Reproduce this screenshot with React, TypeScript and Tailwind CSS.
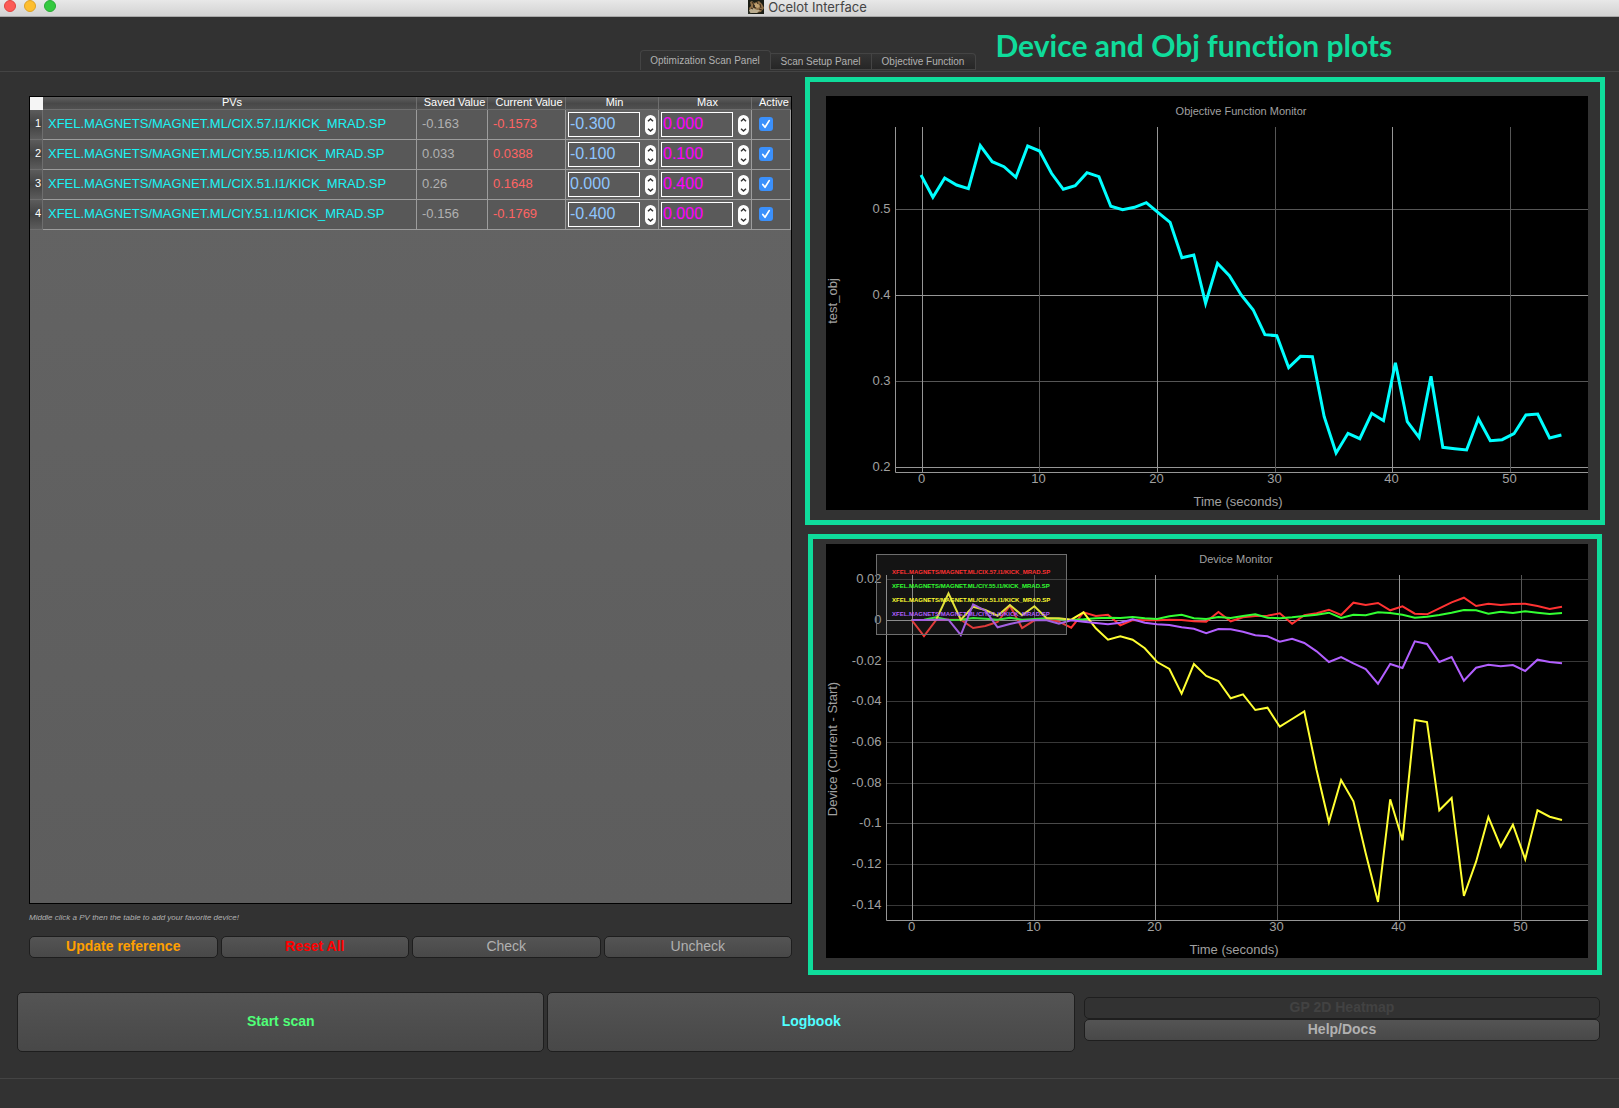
import React from "react";

type Row = { pv: string; saved: string; current: string; min: string; max: string };

const rows: Row[] = [
  { pv: "XFEL.MAGNETS/MAGNET.ML/CIX.57.I1/KICK_MRAD.SP", saved: "-0.163", current: "-0.1573", min: "-0.300", max: "0.000" },
  { pv: "XFEL.MAGNETS/MAGNET.ML/CIY.55.I1/KICK_MRAD.SP", saved: "0.033", current: "0.0388", min: "-0.100", max: "0.100" },
  { pv: "XFEL.MAGNETS/MAGNET.ML/CIX.51.I1/KICK_MRAD.SP", saved: "0.26", current: "0.1648", min: "0.000", max: "0.400" },
  { pv: "XFEL.MAGNETS/MAGNET.ML/CIY.51.I1/KICK_MRAD.SP", saved: "-0.156", current: "-0.1769", min: "-0.400", max: "0.000" },
];

// Chart samples are one per second, measured in thirds of a drawing unit.
const objective = [
  300, 367, 309, 330, 341, 212, 260, 275, 307, 213, 228, 295, 343, 332, 293, 305, 394, 404, 397, 383, 413, 442, 548,
  540, 685, 565, 602, 660, 704, 779, 782, 878, 844, 845, 1025, 1134, 1075, 1091, 1015, 1037, 863, 1040, 1087, 904,
  1117, 1121, 1125, 1031, 1097, 1094, 1076, 1020, 1017, 1089, 1080,
];

const devices = [
  {
    name: rows[0].pv,
    color: "#ff3232",
    data: [
      285, 333, 285, 284, 284, 309, 303, 291, 242, 309, 286, 282, 290, 308, 262, 273, 269, 301, 285, 286, 286, 284, 285,
      289, 290, 261, 289, 277, 273, 272, 265, 296, 271, 265, 254, 270, 233, 240, 234, 256, 244, 266, 268, 250, 232, 218,
      243, 236, 240, 237, 236, 243, 252, 245,
    ],
  },
  {
    name: rows[1].pv,
    color: "#32ff32",
    data: [
      285, 284, 277, 285, 284, 279, 281, 284, 278, 284, 282, 280, 282, 285, 283, 280, 278, 279, 276, 280, 282, 274, 269,
      280, 282, 276, 279, 273, 268, 278, 280, 277, 273, 269, 263, 279, 269, 271, 262, 264, 269, 278, 275, 270, 263, 255,
      256, 266, 260, 264, 259, 263, 267, 264,
    ],
  },
  {
    name: rows[2].pv,
    color: "#ffff32",
    data: [
      285, 285, 284, 205, 284, 245, 255, 272, 240, 271, 244, 280, 280, 284, 262, 310, 344, 334, 344, 370, 411, 432, 506,
      417, 453, 468, 520, 508, 555, 548, 605, 582, 559, 735, 892, 765, 829, 985, 1131, 823, 946, 585, 591, 856, 819,
      1113, 1010, 876, 965, 899, 1003, 856, 875, 885,
    ],
  },
  {
    name: rows[3].pv,
    color: "#b25fff",
    data: [
      285, 285, 284, 284, 330, 238, 257, 307, 297, 289, 285, 286, 296, 286, 290, 294, 298, 293, 283, 293, 298, 300, 307,
      311, 325, 312, 313, 320, 331, 334, 350, 341, 354, 379, 411, 396, 415, 432, 476, 417, 429, 349, 357, 411, 396, 467,
      428, 419, 424, 420, 438, 404, 411, 415,
    ],
  },
];

function toPoints(data: number[], x0: number, step: number, top: number) {
  return data.map((v, i) => `${(x0 + step * i).toFixed(1)},${(v / 3 - top).toFixed(1)}`).join(" ");
}

type Tick = { at: number; label: string; color: string };

type PlotProps = {
  title: string;
  titleX: number;
  yLabel: string;
  xLabelX: number;
  left: number;
  xTicks: Tick[];
  yTicks: Tick[];
  children: React.ReactNode;
};

function Plot({ title, titleX, yLabel, xLabelX, left, xTicks, yTicks, children }: PlotProps) {
  return (
    <svg viewBox="0 0 762 414" className="block w-full bg-black" role="img" aria-label={title} fill="#a0a0a0" fontSize="13">
      {yTicks.map((t) => (
        <g key={t.label}>
          <line x1={left} x2="762" y1={t.at} y2={t.at} stroke={t.color} />
          <text x={left - 5} y={t.at + 3.5} textAnchor="end">{t.label}</text>
        </g>
      ))}
      {xTicks.map((t) => (
        <g key={t.label}>
          <line x1={t.at} x2={t.at} y1="31" y2="376" stroke={t.color} />
          <text x={t.at - 1} y="387" textAnchor="middle">{t.label}</text>
        </g>
      ))}
      <path d={`M${left} 31V376.5H762`} fill="none" stroke="#969696" />
      <text x={titleX} y="19" textAnchor="middle" fontSize="11">{title}</text>
      <text x={xLabelX} y="410" textAnchor="middle">Time (seconds)</text>
      <text transform="translate(11 205) rotate(-90)" textAnchor="middle">{yLabel}</text>
      {children}
    </svg>
  );
}

const bright = "#969696";
const mid = "#565656";
const dim = "#383838";

function ObjectivePlot() {
  return (
    <Plot
      title="Objective Function Monitor"
      titleX={415}
      yLabel="test_obj"
      xLabelX={412}
      left={69.5}
      xTicks={[
        { at: 96.5, label: "0", color: bright },
        { at: 213.5, label: "10", color: mid },
        { at: 331.5, label: "20", color: bright },
        { at: 449.5, label: "30", color: mid },
        { at: 566.5, label: "40", color: bright },
        { at: 684.5, label: "50", color: mid },
      ]}
      yTicks={[
        { at: 113.5, label: "0.5", color: mid },
        { at: 199.5, label: "0.4", color: bright },
        { at: 285.5, label: "0.3", color: mid },
        { at: 371.5, label: "0.2", color: bright },
      ]}
    >
      <polyline points={toPoints(objective, 95, 11.86, 21)} fill="none" stroke="#00ffff" strokeWidth="3" />
    </Plot>
  );
}

function DevicePlot() {
  return (
    <Plot
      title="Device Monitor"
      titleX={410}
      yLabel="Device (Current - Start)"
      xLabelX={408}
      left={60.5}
      xTicks={[
        { at: 86.5, label: "0", color: bright },
        { at: 208.5, label: "10", color: mid },
        { at: 329.5, label: "20", color: bright },
        { at: 451.5, label: "30", color: mid },
        { at: 573.5, label: "40", color: bright },
        { at: 695.5, label: "50", color: mid },
      ]}
      yTicks={[
        { at: 35.5, label: "0.02", color: dim },
        { at: 76.5, label: "0", color: bright },
        { at: 117.5, label: "-0.02", color: dim },
        { at: 157.5, label: "-0.04", color: dim },
        { at: 198.5, label: "-0.06", color: dim },
        { at: 239.5, label: "-0.08", color: dim },
        { at: 279.5, label: "-0.1", color: "#4a4a4a" },
        { at: 320.5, label: "-0.12", color: dim },
        { at: 361.5, label: "-0.14", color: dim },
      ]}
    >
      {devices.map((d) => (
        <polyline key={d.name} points={toPoints(d.data, 85.7, 12.27, 19)} fill="none" stroke={d.color} strokeWidth="2" />
      ))}
      <rect x="50.5" y="10.5" width="190" height="80" fill="#646464" fillOpacity="0.2" stroke="#6e6e6e" />
      {devices.map((d, i) => (
        <text key={d.name} x="66" y={30 + i * 14} fontSize="6" fontWeight="bold" fill={d.color}>{d.name}</text>
      ))}
    </Plot>
  );
}

function SpinBox({ label, value, color }: { label: string; value: string; color: string }) {
  return (
    <div className="flex items-center justify-between px-0.5">
      <input
        type="text"
        inputMode="decimal"
        aria-label={label}
        defaultValue={value}
        className={`h-[25px] w-[72px] border border-white bg-[#5a5a5a] pb-0.5 pl-px text-base leading-5 outline-none ${color}`}
      />
      <div className="flex h-5 w-[11px] flex-col rounded-full bg-white text-[#333]">
        <button type="button" aria-label={`Increase ${label}`} className="flex flex-1 items-center justify-center">
          <svg viewBox="0 0 7 4" className="w-[7px]" fill="none" stroke="currentColor" strokeWidth="1.5"><path d="M1 3.3 3.5 1 6 3.3" /></svg>
        </button>
        <button type="button" aria-label={`Decrease ${label}`} className="flex flex-1 items-center justify-center">
          <svg viewBox="0 0 7 4" className="w-[7px]" fill="none" stroke="currentColor" strokeWidth="1.5"><path d="M1 .7 3.5 3 6 .7" /></svg>
        </button>
      </div>
    </div>
  );
}

const headCell = "border-b border-r border-[#6e6e6e] p-0 pb-0.5 text-center font-normal";
const bodyCell = "border-b border-r border-[#9c9c9c] p-0";

function PvTable() {
  return (
    <table className="w-full table-fixed border-separate border-spacing-0">
      <colgroup>
        <col className="w-[13px]" />
        <col />
        <col className="w-[71px]" />
        <col className="w-[78px]" />
        <col className="w-[93px]" />
        <col className="w-[93px]" />
        <col className="w-[39px]" />
      </colgroup>
      <thead>
        <tr className="h-[13px] whitespace-nowrap bg-linear-to-b from-[#5f5f5f] via-[#484848] to-[#525252] text-[11px] leading-[10px] text-white">
          <td className="bg-[#f5f5f5] p-0" />
          <th scope="col" className={`${headCell} pl-[5px]`}>PVs</th>
          <th scope="col" className={`${headCell} pl-[5px]`}>Saved Value</th>
          <th scope="col" className={`${headCell} pl-[5px]`}>Current Value</th>
          <th scope="col" className={`${headCell} pl-[5px]`}>Min</th>
          <th scope="col" className={`${headCell} pl-[5px]`}>Max</th>
          <th scope="col" className={`${headCell} border-r-0 pl-[5px]`}>Active</th>
        </tr>
      </thead>
      <tbody>
        {rows.map((r, i) => (
          <tr key={r.pv} className="h-[30px] bg-[#585858] text-[13px]">
            <th scope="row" className="border-b border-r border-[#6e6e6e] bg-linear-to-b from-[#5c5c5c] via-[#424242] to-[#5c5c5c] p-0 pb-0.5 pr-px text-right text-[11px] font-normal text-white">
              {i + 1}
            </th>
            <td className={`${bodyCell} whitespace-nowrap pb-0.5 pl-[5px] text-[#18f5f5]`}>{r.pv}</td>
            <td className={`${bodyCell} pb-0.5 pl-[5px] text-[#b1b1b1]`}>{r.saved}</td>
            <td className={`${bodyCell} pb-0.5 pl-[5px] text-[#ff6464]`}>{r.current}</td>
            <td className={`${bodyCell} bg-[#626262]`}>
              <SpinBox label={`Min of row ${i + 1}`} value={r.min} color="text-[#8ec5ff]" />
            </td>
            <td className={`${bodyCell} bg-[#626262]`}>
              <SpinBox label={`Max of row ${i + 1}`} value={r.max} color="text-[#ff00ff]" />
            </td>
            <td className={`${bodyCell} pb-0.5`}>
              <label className="relative ml-[7px] flex w-[14px]">
                <input type="checkbox" defaultChecked aria-label={`Row ${i + 1} active`} className="peer size-[14px] appearance-none rounded-[3px] bg-white checked:bg-[#3b90fb]" />
                <svg viewBox="0 0 14 14" className="pointer-events-none absolute inset-0 hidden peer-checked:block" fill="none" stroke="#fff" strokeWidth="1.7" strokeLinecap="round" strokeLinejoin="round">
                  <path d="M3.8 7.5 6 10.3 10.2 3.6" />
                </svg>
              </label>
            </td>
          </tr>
        ))}
      </tbody>
    </table>
  );
}

const buttonBase = "rounded-[5px] border border-[#1e1e1e] bg-linear-to-b from-[#545454] to-[#484848] pb-0.5 text-sm leading-[18px]";

function OcelotIcon() {
  return (
    <svg viewBox="0 0 16 14" className="h-[14px] w-4" aria-hidden="true">
      <rect width="16" height="14" fill="#1b1d15" />
      <path d="M2 2 4 1 6 3 11 1 14 4 16 8 13 12 7 13 2 11 1 8 3 6Z" fill="#8f7048" />
      <path d="M6 4 9 3 12 6 10 8 7 7Z" fill="#c2a373" />
      <path d="M1 10 5 8 9 10 12 10 9 13H2Z" fill="#b9ab8d" />
      <path d="M4 2 6 5M9 2 10 4M12 4 13 8M5 7 8 8M11 9 14 10M3 8 5 9" stroke="#3a2a18" strokeWidth="1" />
      <circle cx="6" cy="6" r=".9" fill="#111" />
      <path d="M0 11 4 14H0Z" fill="#2c3026" />
    </svg>
  );
}

export default function App() {
  return (
    <div className="flex min-h-screen flex-col bg-[#323232] font-['Liberation_Sans',Arial,sans-serif] text-[#b1b1b1]">
      <div className="grid h-[17px] grid-cols-[1fr_auto_1fr] border-b border-[#a8a8a8] bg-linear-to-b from-[#e8e8e8] to-[#d2d2d2]">
        <div className="flex gap-2 pl-1">
          <button type="button" aria-label="Close" className="size-3 rounded-full border border-[#e0443e] bg-[#fc5b57]" />
          <button type="button" aria-label="Minimize" className="size-3 rounded-full border border-[#dea123] bg-[#fdbe2f]" />
          <button type="button" aria-label="Zoom" className="size-3 rounded-full border border-[#27aa35] bg-[#34c93f]" />
        </div>
        <div className="flex gap-1 pr-1">
          <OcelotIcon />
          <span className="font-[Inter,sans-serif] text-[13px] leading-[14px] text-[#444]">Ocelot Interface</span>
        </div>
      </div>

      <header className="grid h-[55px] grid-cols-[1fr_auto_1fr] border-b border-[#444]">
        <div />
        <div role="tablist" className="flex items-end pb-px pr-1 text-[10px] leading-3">
          <button type="button" role="tab" aria-selected="true" className="h-5 w-[131px] rounded-t-sm border border-b-0 border-[#444]">Optimization Scan Panel</button>
          <button type="button" role="tab" aria-selected="false" className="h-[17px] w-[101px] border border-l-0 border-[#444] bg-linear-to-b from-[#343434] to-[#262626]">Scan Setup Panel</button>
          <button type="button" role="tab" aria-selected="false" className="h-[17px] w-[104px] rounded-tr-sm border border-l-0 border-[#444] bg-linear-to-b from-[#343434] to-[#262626]">Objective Function</button>
        </div>
        <h1 className="whitespace-nowrap pl-4 pt-2.5 font-[Lato,sans-serif] text-[30px] font-bold leading-9 text-[#0fdc9b] [font-variant-ligatures:none]">Device and Obj function plots</h1>
      </header>

      <main className="grid grid-cols-[792fr_827fr]">
        <section className="flex flex-col pb-[17px] pl-[29px] pt-6">
          <div className="flex-1 border border-black bg-linear-to-b from-[#646464] to-[#5d5d5d]">
            <PvTable />
          </div>
          <p className="pt-2 text-[8px] italic leading-3">Middle click a PV then the table to add your favorite device!</p>
          <div className="mt-3 grid grid-cols-4 gap-[3px]">
            <button type="button" className={`${buttonBase} font-bold text-[#ffa000]`}>Update reference</button>
            <button type="button" className={`${buttonBase} font-bold text-[#ff0000]`}>Reset All</button>
            <button type="button" className={buttonBase}>Check</button>
            <button type="button" className={buttonBase}>Uncheck</button>
          </div>
        </section>
        <section className="flex flex-col gap-[9px] pl-[13px] pr-[14px] pt-[5px]">
          <div className="border-[5px] border-[#0fdc9b] pb-2.5 pl-4 pr-3 pt-[14px]">
            <ObjectivePlot />
          </div>
          <div className="mx-[3px] border-[5px] border-[#0fdc9b] pb-3 pl-[13px] pr-[9px] pt-[5px]">
            <DevicePlot />
          </div>
        </section>
      </main>

      <div className="mt-[17px] flex pl-[17px] pr-[19px]">
        <div className="grid flex-1 grid-cols-2 gap-[3px]">
          <button type="button" className={`${buttonBase} h-[60px] font-bold text-[#50ff78]`}>Start scan</button>
          <button type="button" className={`${buttonBase} font-bold text-[#50ffff]`}>Logbook</button>
        </div>
        <div className="ml-[9px] flex w-[32.6%] flex-col justify-center pb-1.5">
          <button type="button" disabled className="rounded-[5px] border border-[#1e1e1e] pb-0.5 text-sm font-bold leading-[18px] text-[#424242]">GP 2D Heatmap</button>
          <button type="button" className={`${buttonBase} font-bold`}>Help/Docs</button>
        </div>
      </div>
      <footer className="mt-[26px] border-t border-[#444]" />
    </div>
  );
}
